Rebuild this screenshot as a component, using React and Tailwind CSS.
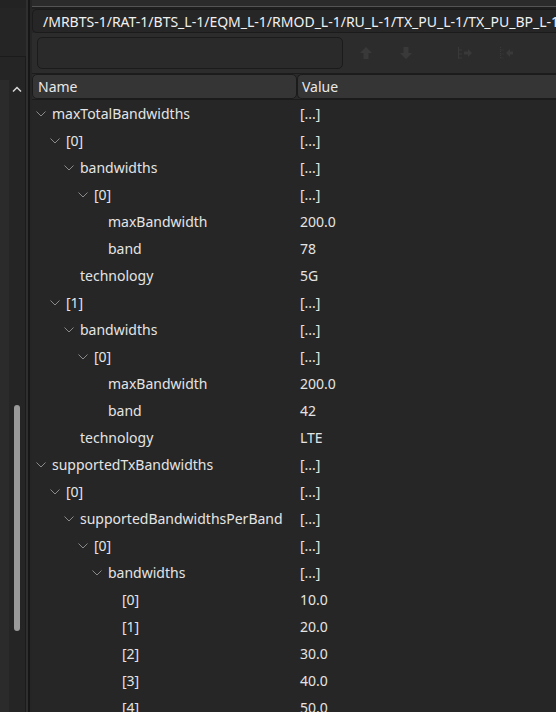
import React from "react";

const rows = [
  [0, "maxTotalBandwidths", "[...]", true],
  [1, "[0]", "[...]", true],
  [2, "bandwidths", "[...]", true],
  [3, "[0]", "[...]", true],
  [4, "maxBandwidth", "200.0", false],
  [4, "band", "78", false],
  [2, "technology", "5G", false],
  [1, "[1]", "[...]", true],
  [2, "bandwidths", "[...]", true],
  [3, "[0]", "[...]", true],
  [4, "maxBandwidth", "200.0", false],
  [4, "band", "42", false],
  [2, "technology", "LTE", false],
  [0, "supportedTxBandwidths", "[...]", true],
  [1, "[0]", "[...]", true],
  [2, "supportedBandwidthsPerBand", "[...]", true],
  [3, "[0]", "[...]", true],
  [4, "bandwidths", "[...]", true],
  [5, "[0]", "10.0", false],
  [5, "[1]", "20.0", false],
  [5, "[2]", "30.0", false],
  [5, "[3]", "40.0", false],
  [5, "[4]", "50.0", false],
];

const Chevron = () => (
  <svg width="10" height="6" viewBox="0 0 10 6" className="shrink-0">
    <path d="M0.5 0.5 L5 5 L9.5 0.5" fill="none" stroke="#8a8a8a" strokeWidth="1" />
  </svg>
);

const indentClass = ["pl-[4px]", "pl-[18px]", "pl-[32px]", "pl-[46px]", "pl-[60px]", "pl-[74px]"];

export default function App() {
  return (
    <div
      className="w-[556px] h-[712px] flex bg-[#262626] overflow-hidden text-[14px] text-[#e4e4e4]"
      style={{ fontFamily: '"Noto Sans", "Open Sans", sans-serif' }}
    >
      {/* left panel */}
      <div className="w-[26px] shrink-0 flex flex-col bg-[#252525]">
        <div className="h-[8px] shrink-0 bg-[#232323]" />
        <div className="h-[49px] shrink-0 border-b border-[#1b1b1b]" />
        <div className="flex-1 flex border-r border-[#1b1b1b]">
          <div className="w-[9px] flex flex-col">
            <div className="h-[23px] shrink-0" />
            <div className="flex-1 bg-[#2b2b2b]" />
          </div>
          <div className="flex-1 flex flex-col items-center pt-[29px]">
            <svg width="10" height="6" viewBox="0 0 10 6" className="shrink-0">
              <path d="M1 5.5 L5 1.5 L9 5.5" fill="none" stroke="#d8d8d8" strokeWidth="1.5" />
            </svg>
            <div className="h-[313px] shrink-0" />
            <div className="w-[6px] h-[226px] shrink-0 rounded-full bg-[#9a9a9a]" />
          </div>
        </div>
      </div>
      {/* dividers */}
      <div className="w-[2px] shrink-0 bg-[#2f2f2f]" />
      <div className="w-[2px] shrink-0 bg-[#161616]" />
      <div className="w-[2px] shrink-0 bg-[#252525]" />

      {/* right panel */}
      <div className="flex-1 flex flex-col min-w-0">
        <div className="h-[6px] shrink-0 bg-[#2b2b2b]" />
        <div className="h-[1px] shrink-0 bg-[#545454]" />
        <div className="h-[2px] shrink-0 bg-[#1f1f1f]" />
        <div className="h-[24px] shrink-0 flex items-center rounded-l-[5px] border border-r-0 border-[#1b1b1b] bg-[#262626] pl-[10px] whitespace-nowrap overflow-hidden text-[14px] text-[#f0f0f0]">
          /MRBTS-1/RAT-1/BTS_L-1/EQM_L-1/RMOD_L-1/RU_L-1/TX_PU_L-1/TX_PU_BP_L-1
        </div>
        <div className="h-[41px] shrink-0 flex items-center bg-[#2c2c2c] border-b border-[#1c1c1c] pl-[5px]">
          <div className="w-[306px] h-[32px] rounded-[5px] border border-[#1b1b1b] bg-[#2a2a2a]" />
          <div className="flex items-center ml-[16px] gap-[26px]">
            <svg width="14" height="14" viewBox="0 0 14 14">
              <path d="M7 1 L13 7 L9.5 7 L9.5 13 L4.5 13 L4.5 7 L1 7 Z" fill="#393939" />
            </svg>
            <svg width="14" height="14" viewBox="0 0 14 14">
              <path d="M7 13 L13 7 L9.5 7 L9.5 1 L4.5 1 L4.5 7 L1 7 Z" fill="#393939" />
            </svg>
            <svg width="16" height="14" viewBox="0 0 16 14" className="ml-[18px]">
              <path d="M1.5 1 V13 M1.5 4 H5 M1.5 8 H5 M1.5 12 H5" stroke="#393939" strokeWidth="1" fill="none" />
              <path d="M7 5.5 H11 V3 L15 7 L11 11 V8.5 H7 Z" fill="#393939" />
            </svg>
            <svg width="16" height="14" viewBox="0 0 16 14">
              <path d="M1.5 1 V13 M1.5 4 H5 M1.5 8 H5 M1.5 12 H5" stroke="#393939" strokeWidth="1" strokeDasharray="1 1" fill="none" />
              <path d="M7 7 L11 3 V5.5 H14 V8.5 H11 V11 Z" fill="#393939" />
            </svg>
          </div>
        </div>
        {/* header */}
        <div className="h-[26px] shrink-0 flex border-b border-[#1b1b1b] bg-[#2a2a2a]">
          <div className="w-[265px] shrink-0 flex items-center pl-[5px] rounded-[5px] border border-[#1b1b1b] bg-[#353535] text-[#e8e8e8]">
            Name
          </div>
          <div className="flex-1 flex items-center pl-[4px] rounded-l-[5px] border border-r-0 border-[#1b1b1b] bg-[#353535] text-[#e8e8e8]">
            Value
          </div>
        </div>
        {/* tree */}
        <div className="flex-1 flex flex-col overflow-hidden">
          {rows.map(([lvl, name, val, exp], i) => (
            <div key={i} className="h-[27px] shrink-0 flex items-center">
              <div className={`w-[266px] shrink-0 flex items-center ${indentClass[lvl]}`}>
                <div className="w-[10px] flex items-center justify-center mr-[6px]">
                  {exp ? <Chevron /> : null}
                </div>
                <span className="whitespace-nowrap">{name}</span>
              </div>
              <span className="pl-[2px] whitespace-nowrap">{val}</span>
            </div>
          ))}
        </div>
      </div>
    </div>
  );
}
